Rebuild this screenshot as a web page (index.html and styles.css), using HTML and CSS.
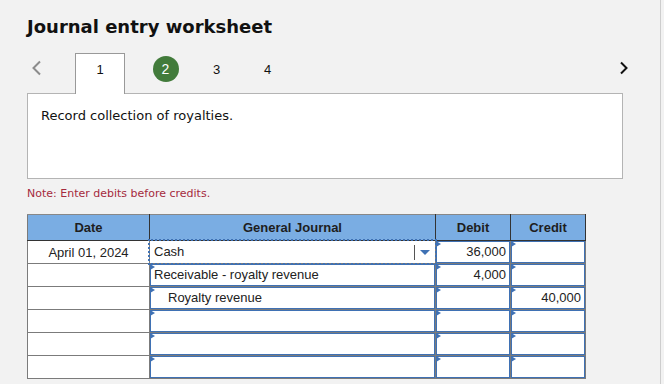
FILE: index.html
```html
<!DOCTYPE html>
<html lang="en">
<head>
  <meta charset="UTF-8">
  <title>Journal entry worksheet</title>
  <link rel="stylesheet" href="styles.css">
</head>
<body>
  <div class="page">
    <h1 class="title">Journal entry worksheet</h1>

    <div class="tabs">
      <svg class="nav prev" width="12" height="16" viewBox="0 0 12 16">
        <polyline points="10,1.5 3.5,8 10,14.5" fill="none" stroke="#8c8c8c" stroke-width="2"/>
      </svg>
      <div class="tab active">1</div>
      <div class="tab"><span class="badge">2</span></div>
      <div class="tab">3</div>
      <div class="tab">4</div>
      <svg class="nav next" width="10" height="16" viewBox="0 0 10 16">
        <polyline points="2,2.5 7.5,8 2,13.5" fill="none" stroke="#111" stroke-width="2"/>
      </svg>
    </div>

    <div class="panel">
      <p>Record collection of royalties.</p>
    </div>

    <p class="note">Note: Enter debits before credits.</p>

    <table class="journal">
      <colgroup>
        <col class="c-date">
        <col class="c-gj">
        <col class="c-amt">
        <col class="c-amt">
      </colgroup>
      <thead>
        <tr>
          <th>Date</th>
          <th>General Journal</th>
          <th>Debit</th>
          <th>Credit</th>
        </tr>
      </thead>
      <tbody>
        <tr>
          <td class="date">April 01, 2024</td>
          <td><div class="field focus"><span class="val">Cash</span><span class="sep"></span><span class="caret"></span></div></td>
          <td><div class="field mark num">36,000</div></td>
          <td><div class="field mark num"></div></td>
        </tr>
        <tr>
          <td class="date"></td>
          <td><div class="field mark">Receivable - royalty revenue</div></td>
          <td><div class="field mark num">4,000</div></td>
          <td><div class="field mark num"></div></td>
        </tr>
        <tr>
          <td class="date"></td>
          <td><div class="field mark indent">Royalty revenue</div></td>
          <td><div class="field mark num"></div></td>
          <td><div class="field mark num">40,000</div></td>
        </tr>
        <tr>
          <td class="date"></td>
          <td><div class="field mark"></div></td>
          <td><div class="field mark num"></div></td>
          <td><div class="field mark num"></div></td>
        </tr>
        <tr>
          <td class="date"></td>
          <td><div class="field mark"></div></td>
          <td><div class="field mark num"></div></td>
          <td><div class="field mark num"></div></td>
        </tr>
        <tr>
          <td class="date"></td>
          <td><div class="field mark"></div></td>
          <td><div class="field mark num"></div></td>
          <td><div class="field mark num"></div></td>
        </tr>
      </tbody>
    </table>
  </div>
</body>
</html>
```

FILE: styles.css
```css
:root {
  --bg: #f2f2f2;
  --blue: #3f71b4;
  --head: #7aade3;
  --grid: #7b7b7b;
}

body {
  margin: 0;
  background: var(--bg);
  font-family: "DejaVu Sans", Verdana, sans-serif;
  color: #111;
}

.page {
  box-sizing: border-box;
  width: 661px;
  min-height: 384px;
  padding: 16px 0 0 27px;
  border-right: 1px solid #cdcdcd;
}

.title {
  margin: 0;
  font-size: 18px;
  line-height: 22px;
  font-weight: bold;
}

/* tabs */
.tabs {
  display: flex;
  align-items: flex-start;
  height: 40px;
  margin-top: 15px;
  font-family: "Liberation Sans", Arial, sans-serif;
  font-size: 13px;
}

.nav {
  margin-top: 7px;
}

.prev {
  margin-left: 3px;
}

.next {
  margin-left: auto;
  margin-right: 31px;
}

.tab {
  width: 51px;
  height: 32px;
  display: flex;
  align-items: center;
  justify-content: center;
}

.tab.active {
  box-sizing: border-box;
  width: 50px;
  height: 41px;
  margin-left: 33px;
  margin-right: 15px;
  padding-bottom: 9px;
  background: #fff;
  border: 1px solid #999;
  border-bottom: none;
  position: relative;
  z-index: 1;
}

.badge {
  width: 26px;
  height: 26px;
  border-radius: 50%;
  background: #427b3b;
  color: #fff;
  font-size: 14px;
  display: flex;
  align-items: center;
  justify-content: center;
}

/* question panel */
.panel {
  box-sizing: border-box;
  width: 596px;
  height: 86px;
  background: #fff;
  border: 1px solid #b4b4b4;
  padding: 14px 13px;
}

.panel p {
  margin: 0;
  font-size: 13px;
  line-height: 16px;
}

.note {
  margin: 8px 0 14px;
  font-size: 11px;
  line-height: 13px;
  color: #a52a3d;
}

/* journal table */
.journal {
  border-collapse: collapse;
  table-layout: fixed;
  width: 559px;
  font-family: "Liberation Sans", Arial, sans-serif;
  font-size: 13px;
  background: #fff;
}

.c-date { width: 122px; }
.c-gj { width: 286px; }
.c-amt { width: 75px; }

.journal th {
  height: 25px;
  padding: 0;
  background: var(--head);
  border: 1px solid #333;
  border-top-color: #888;
  font-weight: bold;
  color: #1e1e1e;
}

.journal th:first-child {
  border-left-color: var(--grid);
}

.journal td {
  height: 22px;
  padding: 0;
  border: 1px solid var(--grid);
}

.journal td.date {
  text-align: center;
  color: #222;
}

.field {
  box-sizing: border-box;
  position: relative;
  height: 22px;
  padding: 0 3px;
  line-height: 20px;
  border: 1px solid var(--blue);
  white-space: nowrap;
  color: #222;
}

.field.mark::before {
  content: "";
  position: absolute;
  top: -1px;
  left: -1px;
  border-left: 5px solid var(--blue);
  border-top: 3px solid transparent;
  border-bottom: 3px solid transparent;
}

.field.num {
  text-align: right;
}

.field.indent {
  padding-left: 17px;
}

.field.focus {
  display: flex;
  align-items: center;
  border-color: transparent;
  outline: 2px dotted var(--blue);
  outline-offset: 0;
}

.field.focus .val {
  flex: 1;
}

.sep {
  width: 1px;
  height: 15px;
  background: #555;
  margin-right: 5px;
}

.caret {
  width: 0;
  height: 0;
  margin-right: 1px;
  border-top: 5px solid var(--blue);
  border-left: 5px solid transparent;
  border-right: 5px solid transparent;
}
```
